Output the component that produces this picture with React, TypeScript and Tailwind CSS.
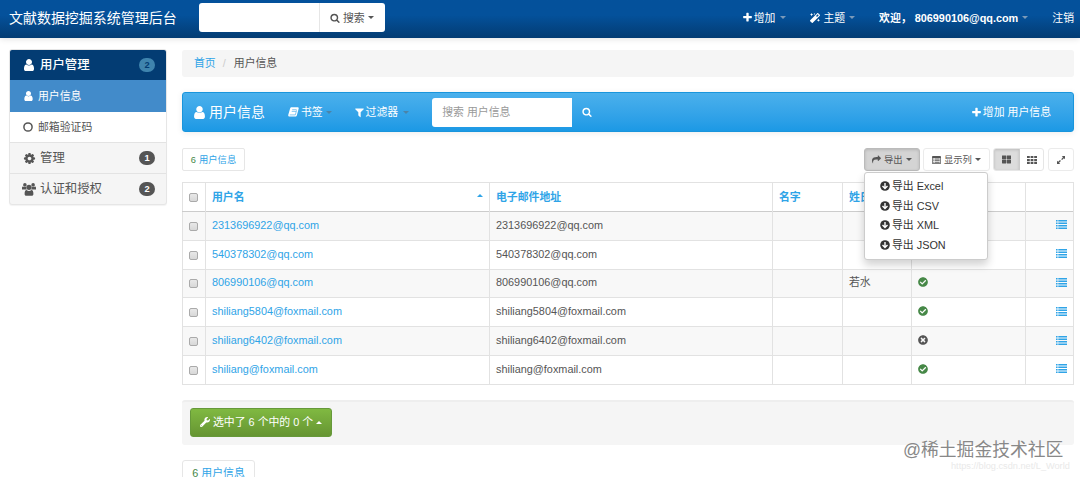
import type { ReactNode } from 'react';
import { FaCheckCircle, FaMagic, FaThLarge, FaTimesCircle, FaWrench } from 'react-icons/fa';

interface Row {
  user: string;
  lastName?: string;
  active?: boolean;
}

const rows: Row[] = [
  { user: '2313696922@qq.com', active: true },
  { user: '540378302@qq.com', active: true },
  { user: '806990106@qq.com', lastName: '若水', active: true },
  { user: 'shiliang5804@foxmail.com', active: true },
  { user: 'shiliang6402@foxmail.com', active: false },
  { user: 'shiliang@foxmail.com', active: true },
];

const formats = ['Excel', 'CSV', 'XML', 'JSON'];

const glyphs = {
  user: 'M1536 1399q0 109-62.5 187t-150.5 78h-854q-88 0-150.5-78t-62.5-187q0-85 8.5-160.5t31.5-152 58.5-131 94-89 134.5-34.5q131 128 313 128t313-128q76 0 134.5 34.5t94 89 58.5 131 31.5 152 8.5 160.5zm-256-887q0 159-112.5 271.5t-271.5 112.5-271.5-112.5-112.5-271.5 112.5-271.5 271.5-112.5 271.5 112.5 112.5 271.5z',
  plus: 'M1600 736v192q0 40-28 68t-68 28h-416v416q0 40-28 68t-68 28h-192q-40 0-68-28t-28-68v-416h-416q-40 0-68-28t-28-68v-192q0-40 28-68t68-28h416v-416q0-40 28-68t68-28h192q40 0 68 28t28 68v416h416q40 0 68 28t28 68z',
  filter: 'M1595 295q17 41-14 70l-493 493v742q0 42-39 59-13 5-25 5-27 0-45-19l-256-256q-19-19-19-45v-486l-493-493q-31-29-14-70 17-39 59-39h1280q42 0 59 39z',
  cog: 'M1152 896q0-106-75-181t-181-75-181 75-75 181 75 181 181 75 181-75 75-181zm512-109v222q0 12-8 23t-20 13l-185 28q-19 54-39 91 35 50 107 138 10 12 10 25t-9 23q-27 37-99 108t-94 71q-12 0-26-9l-138-108q-44 23-91 38-16 136-29 186-7 28-36 28h-222q-14 0-24.5-8.5t-11.5-21.5l-28-184q-49-16-90-37l-141 107q-10 9-25 9-14 0-25-11-126-114-165-168-7-10-7-23 0-12 8-23 15-21 51-66.5t54-70.5q-27-50-41-99l-183-27q-13-2-21-12.5t-8-23.5v-222q0-12 8-23t19-13l186-28q14-46 39-92-40-57-107-138-10-12-10-24 0-10 9-23 26-36 98.5-107.5t94.5-71.5q13 0 26 10l138 107q44-23 91-38 16-136 29-186 7-28 36-28h222q14 0 24.5 8.5t11.5 21.5l28 184q49 16 90 37l142-107q9-9 24-9 13 0 25 10 129 119 165 170 7 8 7 22 0 12-8 23-15 21-51 66.5t-54 70.5q26 50 41 98l183 28q13 2 21 12.5t8 23.5z',
  search: 'M1216 832q0-185-131.5-316.5t-316.5-131.5-316.5 131.5-131.5 316.5 131.5 316.5 316.5 131.5 316.5-131.5 131.5-316.5zm512 832q0 52-38 90t-90 38q-54 0-90-38l-343-342q-179 124-399 124-143 0-273.5-55.5t-225-150-150-225-55.5-273.5 55.5-273.5 150-225 225-150 273.5-55.5 273.5 55.5 225 150 150 225 55.5 273.5q0 220-124 399l343 343q37 37 37 90z',
  share: 'M1792 640q0 26-19 45l-512 512q-19 19-45 19t-45-19-19-45v-256h-224q-98 0-175.5 6t-154 21.5-133 42.5-105.5 69.5-80 101-48.5 138.5-17.5 181q0 55 5 123 0 6 2.5 23.5t2.5 26.5q0 15-8.5 25t-23.5 10q-16 0-28-17-7-9-13-22t-13.5-30-10.5-24q-127-285-127-451 0-199 53-333 162-403 875-403h224v-256q0-26 19-45t45-19 45 19l512 512q19 19 19 45z',
};

function Glyph({ name, className }: { name: keyof typeof glyphs; className: string }) {
  return (
    <svg viewBox={name === 'user' ? '256 128 1280 1536' : '0 0 1792 1792'} fill="currentColor" className={`shrink-0 ${className}`}>
      <path d={glyphs[name]} />
    </svg>
  );
}

function UsersIcon() {
  return (
    <svg viewBox="0 0 14 13" fill="currentColor" className="h-[13px] w-[14px] shrink-0">
      <circle cx="2.9" cy="1.9" r="1.8" />
      <circle cx="11.1" cy="1.9" r="1.8" />
      <path d="M0 6.6V4.8C0 4 .4 3.4 1 3.4c1 .8 2.300.8 3.300.3C4 5 4.400 5.900 5 6.600zM14 6.600V4.800c0-.8-.4-1.400-1-1.400-1 .8-2.300.8-3.300.3.3 1.300-.1 2.200-.7 2.900z" />
      <circle cx="7" cy="4.3" r="2.6" />
      <path d="M2.600 11c0-2.500.7-4 2-4 1.500 1.200 3.300 1.200 4.800 0 1.300 0 2 1.500 2 4 0 1.100-.7 1.800-1.600 1.800H4.200c-.9 0-1.600-.7-1.600-1.800z" />
    </svg>
  );
}

function BookIcon({ className }: { className: string }) {
  return (
    <svg viewBox="0 0 11 10" className={`h-[10px] w-[11px] shrink-0 ${className}`}>
      <path d="M3.600.3h6c.9 0 1.300.6 1.100 1.300L8.900 8.300c-.2.800-.7 1.300-1.500 1.300H1.500C.5 9.600 0 8.800.3 7.800L2.100 1.500C2.300.8 2.900.3 3.600.3z" fill="currentColor" />
      <path d="M4.200 2.700h4.400M3.700 4.400h4.400M1.700 7.900h5.600l1.300-4.600" fill="none" stroke="#35a2e6" strokeWidth=".6" />
    </svg>
  );
}

function ListAltIcon() {
  return (
    <svg viewBox="0 0 10 9" fill="currentColor" className="h-[8px] w-[9px] shrink-0">
      <path fillRule="evenodd" d="M.8 0h8.400q.8 0 .8.8v7.400q0 .8-.8.8H.8Q0 9 0 8.200V.8Q0 0 .8 0zM.8 2.200v6h8.400v-6z" />
      <path d="M1.400 2.900h1.200v1H1.400zM3.200 2.900h5.400v1H3.200zM1.400 4.700h1.200v1H1.400zM3.200 4.700h5.400v1H3.200zM1.400 6.500h1.200v1H1.400zM3.200 6.500h5.400v1H3.200z" />
    </svg>
  );
}

function ListIcon() {
  return (
    <svg viewBox="0 0 11 9" fill="currentColor" className="h-[9px] w-[11px]">
      <path d="M0 0h1.6v1.5H0zM2.3 0H11v1.5H2.3zM0 2.5h1.6V4H0zM2.3 2.5H11V4H2.3zM0 5h1.6v1.5H0zM2.3 5H11v1.500H2.300zM0 7.500h1.600V9H0zM2.300 7.500H11V9H2.300z" />
    </svg>
  );
}

function GridIcon() {
  return (
    <svg viewBox="0 0 10 8" fill="currentColor" className="h-[8px] w-[10px]">
      <path d="M0 0h2.800v2.100H0zM3.600 0h2.800v2.100H3.600zM7.200 0H10v2.100H7.200zM0 2.900h2.800V5H0zM3.600 2.900h2.800V5H3.600zM7.200 2.900H10V5H7.200zM0 5.800h2.800v2.100H0zM3.600 5.800h2.800v2.100H3.600zM7.200 5.800H10v2.100H7.200z" />
    </svg>
  );
}

function ExpandIcon() {
  return (
    <svg viewBox="0 0 9 9" fill="currentColor" className="size-[8px]">
      <path d="M9 0v3.700L7.800 2.500 5.700 4.600l-1-1L6.700 1.400 5.400 0zM0 9V5.400l1.300 1.200 2.100-2.100 1 1-2.100 2.100L3.600 9z" />
    </svg>
  );
}

function DownloadIcon() {
  return (
    <svg viewBox="0 0 10 10" className="size-[10px] shrink-0">
      <circle cx="5" cy="5" r="4.800" fill="currentColor" />
      <path d="M5 2v5.300M2.500 4.900 5 7.400l2.500-2.500" fill="none" stroke="white" strokeWidth="1.400" />
    </svg>
  );
}

function Caret({ className = '' }: { className?: string }) {
  return (
    <svg viewBox="0 0 6 3" fill="currentColor" className={`h-[3px] w-[6px] shrink-0 ${className}`}>
      <path d="M0 0h6L3 3z" />
    </svg>
  );
}

function Checkbox() {
  return <span className="block h-[9px] w-[9px] rounded-[2px] border border-[#aaa] bg-gradient-to-b from-[#e8e8e8] to-[#d8d8d8]" />;
}

function Count({ className, children }: { className: string; children: ReactNode }) {
  return (
    <span className={`ml-auto flex h-[14px] w-[16px] items-center justify-center rounded-full text-[9.3px] font-bold ${className}`}>
      {children}
    </span>
  );
}

function Navbar() {
  return (
    <header className="flex h-[38px] items-center bg-gradient-to-b from-[#04519b] from-40% to-[#033c73] pr-[6px] pl-[9px] text-white shadow-[0_1px_6px_rgba(0,0,0,0.12)]">
      <span className="w-[190px] pb-[3px] text-[13.97px]">文献数据挖掘系统管理后台</span>
      <div className="mb-[3px] flex h-[29px] w-[186px] overflow-hidden rounded-[3px] bg-white text-[#555]">
        <div className="w-[121px] border-r border-[#e6e6e6]" />
        <button className="flex flex-1 items-center pl-[10px]">
          <Glyph name="search" className="size-[10px]" />
          <span className="ml-[3px]">搜索</span>
          <Caret className="ml-[3px]" />
        </button>
      </div>
      <nav className="ml-auto flex items-center pb-[3px]">
        <Glyph name="plus" className="size-[11px]" />
        <span className="ml-[1px]">增加</span>
        <Caret className="ml-[5px] text-[#7b9ab9]" />
        <FaMagic className="ml-[24px] size-[10px]" />
        <span className="ml-[3px]">主题</span>
        <Caret className="ml-[4px] text-[#7b9ab9]" />
        <strong className="ml-[24px]">欢迎，</strong>
        <strong className="ml-[3px]">806990106@qq.com</strong>
        <Caret className="ml-[4px] text-[#7b9ab9]" />
        <span className="ml-[24px]">注销</span>
      </nav>
    </header>
  );
}

function Sidebar() {
  return (
    <aside className="-mt-px w-[158px] shrink-0 self-start overflow-hidden rounded-[3px] border border-[#e6e6e6] bg-[#f5f5f5] shadow-[0_1px_1px_rgba(0,0,0,0.05)]">
      <div className="flex h-[30px] items-center bg-[#033c73] pr-[11px] pl-[14px] text-[12.4px] text-white">
        <Glyph name="user" className="h-[12px] w-[10px]" />
        <span className="ml-[6px] font-medium">用户管理</span>
        <Count className="bg-[#3f84ae] text-[#033c73]">2</Count>
      </div>
      <div className="flex h-[32px] items-center bg-[#428bca] pl-[14px] text-white">
        <Glyph name="user" className="h-[10px] w-[9px]" />
        <span className="ml-[5px]">用户信息</span>
      </div>
      <div className="flex h-[30px] items-center bg-white pl-[13px]">
        <svg viewBox="0 0 10 10" fill="none" stroke="currentColor" strokeWidth="1.5" className="size-[10px]">
          <circle cx="5" cy="5" r="4.1" />
        </svg>
        <span className="ml-[5px]">邮箱验证码</span>
      </div>
      <div className="flex h-[31px] items-center border-t border-[#e3e3e3] pr-[11px] pl-[13px] text-[12.4px]">
        <Glyph name="cog" className="size-[13px]" />
        <span className="ml-[4px]">管理</span>
        <Count className="bg-[#555] text-white">1</Count>
      </div>
      <div className="flex h-[31px] items-center border-t border-[#e3e3e3] pr-[11px] pl-[12px] text-[12.4px]">
        <UsersIcon />
        <span className="ml-[4px]">认证和授权</span>
        <Count className="bg-[#555] text-white">2</Count>
      </div>
    </aside>
  );
}

function ModelBar() {
  return (
    <div className="mt-[15px] flex h-[40px] items-center rounded-[3px] border border-[#1995dc] bg-gradient-to-b from-[#4ab0ec] to-[#1b99e5] pl-[11px] text-white shadow-[0_1px_6px_rgba(0,0,0,0.08)]">
      <Glyph name="user" className="h-[13px] w-[11px]" />
      <span className="ml-[4px] text-[13.97px]">用户信息</span>
      <BookIcon className="ml-[23px]" />
      <span className="ml-[2px]">书签</span>
      <Caret className="ml-[3px] text-[#4b83a8]" />
      <Glyph name="filter" className="ml-[22px] size-[11px]" />
      <span className="ml-[1px]">过滤器</span>
      <Caret className="ml-[5px] text-[#4b83a8]" />
      <div className="ml-[23px] flex h-[29px] w-[140px] items-center rounded-l-[3px] bg-white pl-[10px] text-[#999]">
        搜索 用户信息
      </div>
      <Glyph name="search" className="ml-[10px] size-[10px]" />
      <Glyph name="plus" className="ml-auto size-[11px]" />
      <span className="mr-[22px] ml-[1px]">增加 用户信息</span>
    </div>
  );
}

function ExportMenu() {
  return (
    <ul className="absolute top-[23px] -left-px z-10 h-[88px] w-[124px] rounded-[3px] border border-[#ccc] bg-white pt-[3px] text-[10.87px] text-[#333] shadow-[0_5px_9px_rgba(0,0,0,0.18)]">
      {formats.map((f) => (
        <li key={f} className="flex h-[19.7px] items-center pl-[15px]">
          <DownloadIcon />
          <span className="ml-[2px]">导出 {f}</span>
        </li>
      ))}
    </ul>
  );
}

function Toolbar() {
  return (
    <div className="mt-[16px] flex h-[23px] items-stretch text-[9.3px]">
      <div className="flex w-[63px] items-center justify-center rounded-[2px] border border-[#e6e6e6] text-[#2fa4e7]">
        <span className="mr-[3px] text-[#468847]">6</span>用户信息
      </div>
      <div className="relative ml-auto flex w-[56px] items-center rounded-[3px] border border-[#bbb] bg-[#d4d4d4] pl-[7px] shadow-[inset_0_1px_3px_rgba(0,0,0,0.15)]">
        <Glyph name="share" className="size-[9px]" />
        <span className="ml-[3px]">导出</span>
        <Caret className="ml-[3px]" />
        <ExportMenu />
      </div>
      <div className="ml-[3px] flex w-[67px] items-center rounded-[3px] border border-[#ebebeb] pl-[8px]">
        <ListAltIcon />
        <span className="ml-[3px]">显示列</span>
        <Caret className="ml-[3px]" />
      </div>
      <div className="ml-[3px] flex w-[51px] overflow-hidden rounded-[3px] border border-[#e6e6e6]">
        <div className="flex w-[26px] items-center justify-center border-r border-[#ccc] bg-[#dcdcdc] shadow-[inset_0_1px_3px_rgba(0,0,0,0.15)]">
          <FaThLarge className="size-[9px]" />
        </div>
        <div className="flex flex-1 items-center justify-center">
          <GridIcon />
        </div>
      </div>
      <div className="ml-[4px] flex w-[26px] items-center justify-center rounded-[3px] border border-[#ebebeb]">
        <ExpandIcon />
      </div>
    </div>
  );
}

function ResultTable() {
  return (
    <table className="mt-[11px] w-[891px] table-fixed border-collapse border border-[#e2e2e2]">
      <colgroup>
        <col className="w-[23px]" />
        <col className="w-[284px]" />
        <col className="w-[283px]" />
        <col className="w-[70px]" />
        <col className="w-[69px]" />
        <col className="w-[114px]" />
        <col className="w-[48px]" />
      </colgroup>
      <thead>
        <tr className="h-[29px] border-b border-[#ccc] text-left text-[#2fa4e7] [&>th]:border-r [&>th]:border-[#e2e2e2] [&>th]:px-[6px] [&>th]:py-0">
          <th><Checkbox /></th>
          <th>
            <div className="flex items-center justify-between">
              用户名
              <Caret className="mb-[3px] rotate-180" />
            </div>
          </th>
          <th>电子邮件地址</th>
          <th>名字</th>
          <th>姓氏</th>
          <th />
          <th />
        </tr>
      </thead>
      <tbody>
        {rows.map((row) => (
          <tr key={row.user} className="h-[28.8px] border-t border-[#e2e2e2] odd:bg-[#f8f8f8] [&>td]:border-r [&>td]:border-[#e2e2e2] [&>td]:px-[6px] [&>td]:pt-0 [&>td]:pb-[2px]">
            <td className="!pt-px !pb-0"><Checkbox /></td>
            <td className="text-[#2fa4e7]">{row.user}</td>
            <td>{row.user}</td>
            <td />
            <td>{row.lastName}</td>
            <td>
              {row.active ? <FaCheckCircle className="size-[10px] text-[#468847]" /> : <FaTimesCircle className="size-[10px]" />}
            </td>
            <td>
              <div className="flex justify-end text-[#2fa4e7]"><ListIcon /></div>
            </td>
          </tr>
        ))}
      </tbody>
    </table>
  );
}

export default function App() {
  return (
    <div
      lang="zh-CN"
      className="relative h-[477px] w-[1080px] overflow-hidden bg-white font-['Liberation_Sans','Noto_Sans_CJK_SC',sans-serif] text-[10.87px] leading-[16px] whitespace-nowrap text-[#555]"
    >
      <Navbar />
      <div className="flex pt-[12px] pl-[9px]">
        <Sidebar />
        <main className="ml-[15px] w-[892px]">
          <div className="flex h-[27px] items-center rounded-[3px] bg-[#f5f5f5] pb-[1px] pl-[12px]">
            <span className="text-[#2fa4e7]">首页</span>
            <span className="mx-[7px] text-[#ccc]">/</span>
            <span className="ml-px">用户信息</span>
          </div>
          <ModelBar />
          <Toolbar />
          <ResultTable />
          <div className="mt-[15px] flex h-[45px] items-center rounded-[3px] border-t-2 border-[#eee] bg-[#f5f5f5] pb-[2px] pl-[8px]">
            <button className="flex h-[29px] w-[142px] items-center rounded-[3px] border border-[#66993a] bg-gradient-to-b from-[#80b941] to-[#669533] pl-[9px] text-white">
              <FaWrench className="size-[10px]" />
              <span className="ml-[3px]">选中了 6 个中的 0 个</span>
              <Caret className="ml-[3px] rotate-180" />
            </button>
          </div>
          <div className="mt-[15px] flex h-[27px] w-[73px] items-center justify-center rounded-[3px] border border-[#e6e6e6] text-[#2fa4e7]">
            <span className="mr-[3px] text-[#468847]">6</span>用户信息
          </div>
        </main>
      </div>
      <span className="absolute top-[438px] left-[903px] text-[17.8px] leading-[24px] text-[#888] [text-shadow:0_1px_1px_#fff]">@稀土掘金技术社区</span>
      <span className="absolute top-[458px] left-[951px] text-[9.2px] text-[#e9e9e9]">https://blog.csdn.net/L_World</span>
    </div>
  );
}
